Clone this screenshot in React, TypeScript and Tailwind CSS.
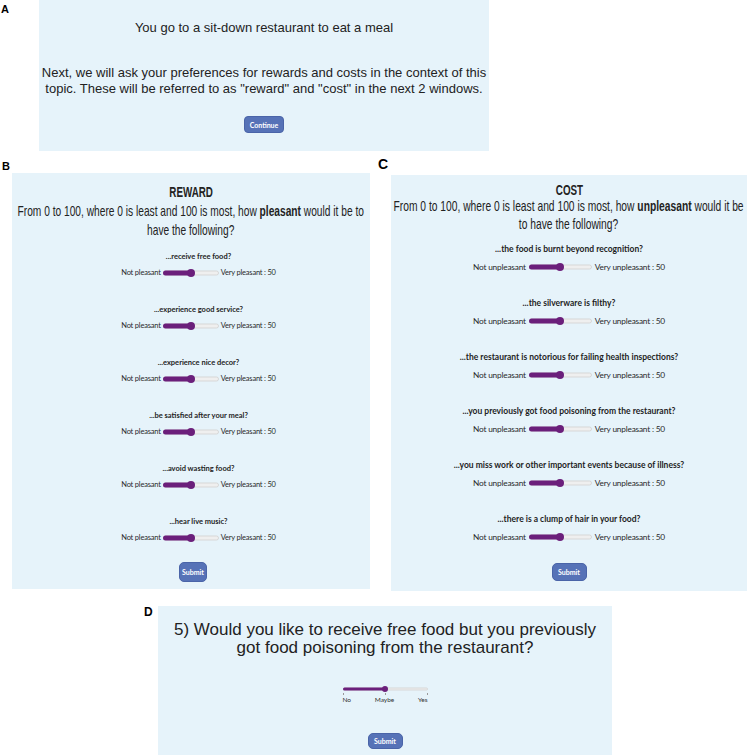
import React from "react";

type Rating = { q: string };

const rewardItems: Rating[] = [
  { q: "...receive free food?" },
  { q: "...experience good service?" },
  { q: "...experience nice decor?" },
  { q: "...be satisfied after your meal?" },
  { q: "...avoid wasting food?" },
  { q: "...hear live music?" },
];

const costItems: Rating[] = [
  { q: "...the food is burnt beyond recognition?" },
  { q: "...the silverware is filthy?" },
  { q: "...the restaurant is notorious for failing health inspections?" },
  { q: "...you previously got food poisoning from the restaurant?" },
  { q: "...you miss work or other important events because of illness?" },
  { q: "...there is a clump of hair in your food?" },
];

function RangeTrack({ value, thin }: { value: number; thin?: boolean }) {
  const track = thin ? "h-[3px]" : "h-[5px]";
  const thumb = thin ? "h-[6px] w-[6px]" : "h-[8px] w-[8px]";
  return (
    <div className="relative h-full w-full">
      <div
        className={`absolute inset-x-0 top-1/2 -translate-y-1/2 rounded-full border border-[#d7d7d7] bg-[#efefef] ${track}`}
      />
      <div
        className={`absolute left-0 top-1/2 -translate-y-1/2 rounded-l-full bg-[#6b1f7b] ${track}`}
        style={{ width: `${value}%` }}
      />
      <div
        className={`absolute top-1/2 -translate-x-1/2 -translate-y-1/2 rounded-full bg-[#6b1f7b] ${thumb}`}
        style={{ left: `${value}%` }}
      />
    </div>
  );
}

function RewardItem({ q }: Rating) {
  return (
    <div className="flex flex-col items-center font-['Lato',sans-serif] text-[#2a2a2a]">
      <div className="text-[7.5px] font-bold leading-[12px] text-[#1e1e1e]">{q}</div>
      <div className="mt-[4px] flex h-[12px] items-center gap-[2px] text-[7.5px] leading-[12px] tracking-[-0.2px]">
        <span>Not pleasant</span>
        <div className="h-[8px] w-[56px]">
          <RangeTrack value={50} />
        </div>
        <span>Very pleasant : 50</span>
      </div>
    </div>
  );
}

function CostItem({ q }: Rating) {
  return (
    <div className="flex flex-col items-center font-['Lato',sans-serif] text-[#2a2a2a]">
      <div className="text-[8.5px] font-bold leading-[12px] text-[#1e1e1e]">{q}</div>
      <div className="mt-[6px] flex h-[12px] items-center gap-[3px] text-[8.3px] leading-[12px] tracking-[-0.2px]">
        <span>Not unpleasant</span>
        <div className="h-[8px] w-[63px]">
          <RangeTrack value={50} />
        </div>
        <span>Very unpleasant : 50</span>
      </div>
    </div>
  );
}

function SubmitButton({ size }: { size: string }) {
  return (
    <button
      className={`rounded-[5px] border border-[#4a64a8] bg-[#5672b7] font-['Lato',sans-serif] text-[7px] font-bold text-white ${size}`}
    >
      Submit
    </button>
  );
}

export default function App() {
  return (
    <div className="h-[755px] w-[747px] overflow-hidden bg-white font-['Liberation_Sans',Arial,sans-serif] text-[#222]">
      {/* Intro window */}
      <div className="flex h-[151px]">
        <div className="w-[39px] pl-[1px] pt-[4px] text-[11px] font-bold leading-[11px] text-black">A</div>
        <section className="flex w-[450px] flex-col items-center bg-[#e6f3fa] pt-[20px] text-[13px] leading-[16px]">
          <p>You go to a sit-down restaurant to eat a meal</p>
          <p className="mt-[29px] text-center">
            Next, we will ask your preferences for rewards and costs in the context of this
            <br />
            topic. These will be referred to as "reward" and "cost" in the next 2 windows.
          </p>
          <button className="mt-[19px] h-[17px] w-[40px] rounded-[4px] border border-[#4a64a8] bg-[#5672b7] font-['Lato',sans-serif] text-[7px] font-bold text-white">
            Continue
          </button>
        </section>
      </div>

      {/* Reward and cost windows */}
      <div className="flex h-[440px]">
        <div className="w-[378px] shrink-0">
          <div className="h-[22px] pl-[2px] pt-[10px] text-[11px] font-bold leading-[11px] text-black">B</div>
          <section className="ml-[12px] flex h-[416px] w-[358px] flex-col items-center overflow-hidden bg-[#e6f3fa] pt-[10px]">
            <div className="shrink-0 scale-x-[0.7] whitespace-nowrap text-[14px] font-bold leading-[18px]">REWARD</div>
            <div className="shrink-0 scale-x-[0.68] whitespace-nowrap text-center text-[15px] leading-[19px]">
              From 0 to 100, where 0 is least and 100 is most, how <b>pleasant</b> would it be to
              <br />
              have the following?
            </div>
            <div className="mt-[12px] flex flex-col gap-[25px] pl-[15px]">
              {rewardItems.map((item) => (
                <RewardItem key={item.q} q={item.q} />
              ))}
            </div>
            <div className="mt-[14px] pl-[4px]">
              <SubmitButton size="h-[20px] w-[28px]" />
            </div>
          </section>
        </div>

        <div className="w-[369px] min-w-0 shrink-0">
          <div className="h-[24px] pt-[6px] text-[14px] font-bold leading-[14px] text-black">C</div>
          <section className="ml-[13px] flex h-[416px] w-[356px] flex-col items-center overflow-hidden bg-[#e6f3fa] pt-[8px]">
            <div className="shrink-0 scale-x-[0.7] whitespace-nowrap text-[14px] font-bold leading-[14px]">COST</div>
            <div className="shrink-0 scale-x-[0.685] whitespace-nowrap text-center text-[15px] leading-[18px]">
              From 0 to 100, where 0 is least and 100 is most, how <b>unpleasant</b> would it be
              <br />
              to have the following?
            </div>
            <div className="mt-[10px] flex flex-col gap-[24px]">
              {costItems.map((item) => (
                <CostItem key={item.q} q={item.q} />
              ))}
            </div>
            <div className="mt-[15px]">
              <SubmitButton size="h-[18px] w-[35px]" />
            </div>
          </section>
        </div>
      </div>

      {/* Combined question window */}
      <div className="flex pl-[144px] pt-[15px]">
        <div className="w-[14px] text-[12px] font-bold leading-[12px] text-black">D</div>
        <section className="flex h-[152px] w-[454px] flex-col items-center bg-[#e6f3fa] pt-[15px]">
          <p className="text-center text-[17px] leading-[18px]">
            5) Would you like to receive free food but you previously
            <br />
            got food poisoning from the restaurant?
          </p>
          <div className="mt-[29px] w-[85px] font-['Lato',sans-serif] text-[#333]">
            <div className="h-[6px]">
              <RangeTrack value={50} thin />
            </div>
            <div className="relative h-[4px]">
              <span className="absolute left-0 top-[1px] h-[2px] w-px bg-[#999]" />
              <span className="absolute left-1/2 top-[1px] h-[2px] w-px bg-[#999]" />
              <span className="absolute right-0 top-[1px] h-[2px] w-px bg-[#999]" />
            </div>
            <div className="flex justify-between text-[6.5px] leading-[8px]">
              <span>No</span>
              <span>Maybe</span>
              <span>Yes</span>
            </div>
          </div>
          <div className="mt-[23px]">
            <SubmitButton size="h-[16px] w-[35px]" />
          </div>
        </section>
      </div>
    </div>
  );
}
